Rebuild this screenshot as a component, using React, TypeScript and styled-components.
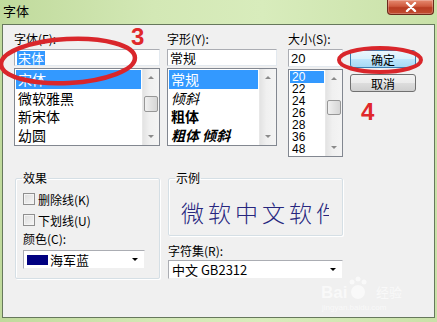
import React from 'react';
import styled, { createGlobalStyle } from 'styled-components';

const Global = createGlobalStyle`
  html, body { margin: 0; padding: 0; }
  body {
    width: 437px; height: 322px; overflow: hidden;
    font-family: "Noto Sans CJK SC", "Noto Sans", sans-serif;
    color: #000;
  }
`;

const Window = styled.div`
  position: relative;
  width: 437px; height: 322px;
  display: flex; flex-direction: column;
  overflow: hidden;
  background: linear-gradient(90deg, #c0da9c 0%, #d3e8b5 35%, #d8ecbc 60%, #c9e1a8 100%);
`;

const TitleBar = styled.div`
  height: 24px;
  display: flex; align-items: flex-start; justify-content: space-between;
  padding: 0 3px 0 3px;
`;

const Title = styled.div`
  font-size: 13px; line-height: 21px;
`;

const CloseBtn = styled.div`
  width: 45px; height: 14px;
  border: 1px solid #6b2a1c; border-top: none;
  border-radius: 0 0 4px 4px;
  background: linear-gradient(#e68a70, #cf5a3e 45%, #b83c22 55%, #c24c30);
  display: flex; align-items: center; justify-content: center;
  box-shadow: inset 0 0 0 1px rgba(255,255,255,0.25);
`;

const Frame = styled.div`
  flex: 1;
  margin: 0 2px 4px 2px;
  border: 1px solid #66785c;
  background: #f0f0f0;
  padding: 7px 0 0 11px;
  display: flex; flex-direction: column;
`;

const TopRow = styled.div`
  display: flex; align-items: flex-start;
`;

const Column = styled.div<{ $w: number; $gap: number }>`
  width: ${p => p.$w}px;
  margin-right: ${p => p.$gap}px;
  display: flex; flex-direction: column;
`;

const Label = styled.div<{ $mt?: number }>`
  font-size: 12px; line-height: 14px; white-space: nowrap;
  margin-top: ${p => p.$mt ?? 0}px;
`;

const Input = styled.div<{ $h?: number }>`
  margin-top: 3px;
  height: ${p => p.$h ?? 17}px;
  box-sizing: border-box;
  background: #fff;
  border: 1px solid #abadb3;
  border-right-color: #e3e9ef; border-bottom-color: #e3e9ef;
  display: flex; align-items: center;
  padding-left: 2px;
  font-size: 13px;
`;

const InputSel = styled.span`
  background: #3399ff; color: #fff; line-height: 14px; padding: 0 1px;
`;

const SizeText = styled.span`
  font-family: "Liberation Sans", Arial, sans-serif; font-size: 13px;
`;

const ListBox = styled.div<{ $h: number }>`
  margin-top: 2px;
  height: ${p => p.$h}px;
  box-sizing: border-box;
  background: #fff;
  border: 1px solid #828790;
  display: flex;
`;

const ListItems = styled.div`
  flex: 1; display: flex; flex-direction: column; padding: 1px; overflow: hidden;
`;

const Item = styled.div<{ $sel?: boolean; $h: number; $fs: number; $w?: string; $i?: boolean; $mono?: boolean }>`
  height: ${p => p.$h}px; line-height: ${p => p.$h}px;
  font-size: ${p => p.$fs}px;
  font-weight: ${p => p.$w ?? 'normal'};
  font-style: ${p => (p.$i ? 'italic' : 'normal')};
  font-family: ${p => (p.$mono ? '"Liberation Sans", Arial, sans-serif' : '"Noto Sans CJK SC", sans-serif')};
  background: ${p => (p.$sel ? '#3399ff' : 'transparent')};
  color: ${p => (p.$sel ? '#fff' : '#000')};
  padding-left: 2px; white-space: nowrap; flex-shrink: 0;
`;

const ScrollBar = styled.div`
  width: 17px; display: flex; flex-direction: column;
  background: linear-gradient(90deg, #e3e3e3, #f0f0f0 40%, #f4f4f4);
  border-left: 1px solid #e8e8e8;
  box-sizing: border-box;
`;

const ArrowBtn = styled.div`
  height: 17px; display: flex; align-items: center; justify-content: center;
`;

const Tri = styled.div<{ $down?: boolean; $c?: string }>`
  width: 0; height: 0;
  border-left: 3px solid transparent; border-right: 3px solid transparent;
  ${p => (p.$down ? `border-top: 3px solid ${p.$c ?? '#8a8a8a'};` : `border-bottom: 3px solid ${p.$c ?? '#8a8a8a'};`)}
`;

const Track = styled.div`
  flex: 1; position: relative;
`;

const Thumb = styled.div<{ $top: number; $h: number }>`
  position: absolute; left: 1px; right: 1px;
  top: ${p => p.$top}px; height: ${p => p.$h}px;
  border: 1px solid #979797; border-radius: 2px;
  background: linear-gradient(90deg, #f0f0f0, #e2e2e2 50%, #d6d6d6);
  box-sizing: border-box;
`;

const Buttons = styled.div`
  width: 66px; margin-top: 18px;
  display: flex; flex-direction: column; gap: 6px;
`;

const Button = styled.div<{ $def?: boolean }>`
  height: 18px; box-sizing: border-box;
  border: 1px solid ${p => (p.$def ? '#3c7fb1' : '#707070')};
  border-radius: 3px;
  background: ${p => (p.$def
    ? 'linear-gradient(#eaf6fd, #d9f0fc 50%, #bee6fd 51%, #a7d9f5)'
    : 'linear-gradient(#f2f2f2, #ebebeb 50%, #dddddd 51%, #cfcfcf)')};
  display: flex; align-items: center; justify-content: center;
  font-size: 12px;
`;

const BottomRow = styled.div`
  display: flex; align-items: flex-start; margin-top: 14px;
`;

const Group = styled.fieldset<{ $w: number; $h: number; $ml: number }>`
  margin: 0 0 0 ${p => p.$ml}px; padding: 0 8px 0 7px;
  width: ${p => p.$w}px; height: ${p => p.$h}px;
  box-sizing: border-box;
  border: 1px solid #d5dfe5;
  box-shadow: inset 1px 1px 0 #fff, 1px 1px 0 #fff;
  border-radius: 2px;
  display: flex; flex-direction: column;
  min-width: 0;
`;

const Legend = styled.legend`
  font-size: 12px; line-height: 14px; padding: 0 1px; margin-left: -1px;
`;

const CheckRow = styled.div`
  margin-top: 7px; height: 14px;
  display: flex; align-items: center; gap: 3px;
  font-size: 12px;
`;

const CheckBox = styled.div`
  width: 12px; height: 12px; box-sizing: border-box;
  border: 1px solid #8f8f8f;
  background: linear-gradient(135deg, #dcdcdc, #f6f6f6);
  box-shadow: inset 0 0 0 1px #f4f4f4;
`;

const Select = styled.div<{ $w: number; $mt: number }>`
  width: ${p => p.$w}px; height: 19px; margin-top: ${p => p.$mt}px;
  box-sizing: border-box;
  background: #fff;
  border: 1px solid #abadb3;
  border-right-color: #f0f0f0; border-bottom-color: #f0f0f0;
  display: flex; align-items: center;
  padding: 0 6px 0 3px;
  font-size: 13px;
`;

const Swatch = styled.div`
  width: 21px; height: 10px; background: #000080; margin-right: 2px;
`;

const SelText = styled.span`
  flex: 1; white-space: nowrap;
`;

const RightCol = styled.div`
  margin-left: 8px; display: flex; flex-direction: column;
`;

const SampleView = styled.div`
  margin-top: 13px; width: 148px; overflow: hidden;
  padding-left: 5px;
  height: 28px; line-height: 28px;
  font-size: 23px; letter-spacing: 4px; white-space: nowrap;
  color: #26267e;
  font-weight: 300;
`;

const Overlay = styled.svg`
  position: absolute; left: 0; top: 0; pointer-events: none;
`;

function Scroll({ thumb }: { thumb?: [number, number] }) {
  return (
    <ScrollBar>
      <ArrowBtn><Tri /></ArrowBtn>
      <Track>{thumb && <Thumb $top={thumb[0]} $h={thumb[1]} />}</Track>
      <ArrowBtn><Tri $down /></ArrowBtn>
    </ScrollBar>
  );
}

export default function App() {
  return (
    <Window>
      <Global />
      <TitleBar>
        <Title>字体</Title>
        <CloseBtn>
          <svg width="12" height="10" viewBox="0 0 12 10">
            <path d="M2 1 L10 9 M10 1 L2 9" stroke="#fff" strokeWidth="2.4" strokeLinecap="round" />
          </svg>
        </CloseBtn>
      </TitleBar>
      <Frame>
        <TopRow>
          <Column $w={146} $gap={7}>
            <Label>字体(F):</Label>
            <Input $h={17}><InputSel>宋体</InputSel></Input>
            <ListBox $h={78}>
              <ListItems>
                <Item $h={18.5} $fs={14} $sel>宋体</Item>
                <Item $h={18.5} $fs={14}>微软雅黑</Item>
                <Item $h={18.5} $fs={14}>新宋体</Item>
                <Item $h={18.5} $fs={14}>幼圆</Item>
              </ListItems>
              <Scroll thumb={[10, 16]} />
            </ListBox>
          </Column>
          <Column $w={110} $gap={11}>
            <Label>字形(Y):</Label>
            <Input $h={17}>常规</Input>
            <ListBox $h={78}>
              <ListItems>
                <Item $h={18.5} $fs={14} $sel>常规</Item>
                <Item $h={18.5} $fs={14} $i>倾斜</Item>
                <Item $h={18.5} $fs={14} $w="bold">粗体</Item>
                <Item $h={18.5} $fs={14} $w="bold" $i>粗体 倾斜</Item>
              </ListItems>
              <Scroll />
            </ListBox>
          </Column>
          <Column $w={55} $gap={7}>
            <Label>大小(S):</Label>
            <Input $h={18}><SizeText>20</SizeText></Input>
            <ListBox $h={88}>
              <ListItems>
                {['20', '22', '24', '26', '28', '36', '48'].map((s, i) => (
                  <Item key={s} $h={12} $fs={12} $mono $sel={i === 0}>{s}</Item>
                ))}
              </ListItems>
              <Scroll thumb={[13, 15]} />
            </ListBox>
          </Column>
          <Buttons>
            <Button $def>确定</Button>
            <Button>取消</Button>
          </Buttons>
        </TopRow>
        <BottomRow>
          <Group $w={145} $h={108} $ml={1}>
            <Legend>效果</Legend>
            <CheckRow><CheckBox />删除线(K)</CheckRow>
            <CheckRow><CheckBox />下划线(U)</CheckRow>
            <Label $mt={5}>颜色(C):</Label>
            <Select $w={122} $mt={4}>
              <Swatch />
              <SelText>海军蓝</SelText>
              <Tri $down $c="#000" />
            </Select>
          </Group>
          <RightCol>
            <Group $w={175} $h={65} $ml={0}>
              <Legend>示例</Legend>
              <SampleView>微软中文软件</SampleView>
            </Group>
            <Label $mt={8}>字符集(R):</Label>
            <Select $w={175} $mt={2}>
              <SelText>中文 GB2312</SelText>
              <Tri $down $c="#000" />
            </Select>
          </RightCol>
        </BottomRow>
      </Frame>
      <Overlay width="437" height="322" viewBox="0 0 437 322">
        <ellipse cx="68" cy="61" rx="67" ry="22" fill="none" stroke="#d9262b" strokeWidth="4.5" transform="rotate(-3 68 61)" />
        <ellipse cx="380" cy="60" rx="41" ry="12" fill="none" stroke="#d9262b" strokeWidth="4" />
        <text x="131" y="45" fontFamily="Liberation Sans, Arial, sans-serif" fontWeight="bold" fontSize="24" fill="#e0282a">3</text>
        <text x="361" y="120" fontFamily="Liberation Sans, Arial, sans-serif" fontWeight="bold" fontSize="24" fill="#e0282a">4</text>
        <g fill="#ffffff" opacity="0.6" fontFamily="Liberation Sans, Arial, sans-serif">
          <text x="321" y="298" fontSize="17" fontWeight="bold">Bai</text>
          <circle cx="358" cy="292" r="7" />
          <circle cx="352" cy="282" r="2.5" />
          <circle cx="358" cy="279" r="2.5" />
          <circle cx="364" cy="282" r="2.5" />
          <text x="376" y="297" fontSize="13" fontFamily="Noto Sans CJK SC, sans-serif">经验</text>
          <text x="322" y="310" fontSize="8">jingyan.baidu.com</text>
        </g>
      </Overlay>
    </Window>
  );
}
